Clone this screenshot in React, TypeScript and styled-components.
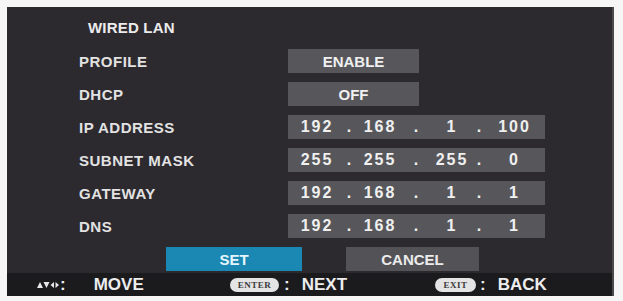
import React from 'react';
import styled, { createGlobalStyle } from 'styled-components';

const GlobalStyle = createGlobalStyle`
  html, body {
    margin: 0;
    padding: 0;
    background: #f6f6f6;
  }
  body {
    font-family: "Liberation Sans", Arial, sans-serif;
  }
`;

const Screen = styled.div`
  margin: 7px 0 0 7px;
  width: 607px;
  height: 289px;
  background: #2c2a2f;
  border-right: 2px solid #4a494d;
  box-sizing: border-box;
  display: flex;
  flex-direction: column;
  overflow: hidden;
`;

const Body = styled.div`
  flex: 1;
  padding: 9px 0 0 72px;
  display: flex;
  flex-direction: column;
  gap: 9px;
`;

const Title = styled.div`
  height: 24px;
  line-height: 24px;
  margin-left: 9px;
  color: #ececec;
  font-size: 15px;
  font-weight: bold;
  letter-spacing: 0.2px;
`;

const Row = styled.div`
  display: grid;
  grid-template-columns: 209px auto;
  height: 24px;
  align-items: center;
`;

const Label = styled.div`
  color: #e2e2e2;
  font-size: 15px;
  font-weight: bold;
  letter-spacing: 0.5px;
`;

const ValueBox = styled.div`
  width: 131px;
  height: 24px;
  background: #57575b;
  color: #f0f0f0;
  font-size: 15px;
  font-weight: bold;
  display: flex;
  align-items: center;
  justify-content: center;
`;

const IpBox = styled.div`
  width: 257px;
  height: 24px;
  background: #57575b;
  color: #f0f0f0;
  font-size: 16px;
  font-weight: bold;
  letter-spacing: 2px;
  display: grid;
  grid-template-columns: 58px 8px 52px 22px 48px 8px 1fr;
  align-items: center;
  text-align: center;
`;

const Buttons = styled.div`
  display: flex;
  gap: 44px;
  margin-left: 87px;
`;

const Button = styled.div<{ $active?: boolean }>`
  width: ${(p) => (p.$active ? '136px' : '133px')};
  height: 24px;
  background: ${(p) => (p.$active ? '#1b88b4' : '#535357')};
  color: ${(p) => (p.$active ? '#e6f6fb' : '#ececec')};
  font-size: 15px;
  font-weight: bold;
  display: flex;
  align-items: center;
  justify-content: center;
`;

const Footer = styled.div`
  height: 23px;
  margin-top: 2px;
  background: #1b1a1d;
  display: grid;
  grid-template-columns: 193px 205px 1fr;
  align-items: center;
  padding-left: 30px;
`;

const Hint = styled.div`
  display: flex;
  align-items: center;
  color: #ededed;
  font-size: 17px;
  font-weight: bold;
`;

const Colon = styled.span<{ $before: number; $after: number }>`
  margin: 0 ${(p) => p.$after}px 0 ${(p) => p.$before}px;
`;

const Pill = styled.span<{ $w: number }>`
  width: ${(p) => p.$w}px;
  height: 14px;
  border-radius: 7px;
  background: #e4e4e4;
  color: #3a3a3a;
  font-family: "Liberation Serif", serif;
  font-size: 9px;
  font-weight: bold;
  letter-spacing: 0.5px;
  display: flex;
  align-items: center;
  justify-content: center;
`;

const Arrows = () => (
  <svg width="22" height="8" viewBox="0 0 22 8">
    <polygon points="0,7 3,1 6,7" fill="#e8e8e8" />
    <polygon points="6.5,1 12.5,1 9.5,7" fill="#e8e8e8" />
    <polygon points="13.5,4 17,1 17,7" fill="#e8e8e8" />
    <polygon points="18.5,1 22,4 18.5,7" fill="#e8e8e8" />
  </svg>
);

const Ip = ({ parts }: { parts: string[] }) => (
  <IpBox>
    <span>{parts[0]}</span>
    <span>.</span>
    <span>{parts[1]}</span>
    <span>.</span>
    <span>{parts[2]}</span>
    <span>.</span>
    <span>{parts[3]}</span>
  </IpBox>
);

const ipRows = [
  { label: 'IP ADDRESS', parts: ['192', '168', '1', '100'] },
  { label: 'SUBNET MASK', parts: ['255', '255', '255', '0'] },
  { label: 'GATEWAY', parts: ['192', '168', '1', '1'] },
  { label: 'DNS', parts: ['192', '168', '1', '1'] },
];

export default function App() {
  return (
    <>
      <GlobalStyle />
      <Screen>
        <Body>
          <Title>WIRED LAN</Title>
          <Row>
            <Label>PROFILE</Label>
            <ValueBox>ENABLE</ValueBox>
          </Row>
          <Row>
            <Label>DHCP</Label>
            <ValueBox>OFF</ValueBox>
          </Row>
          {ipRows.map((r) => (
            <Row key={r.label}>
              <Label>{r.label}</Label>
              <Ip parts={r.parts} />
            </Row>
          ))}
          <Buttons>
            <Button $active>SET</Button>
            <Button>CANCEL</Button>
          </Buttons>
        </Body>
        <Footer>
          <Hint>
            <Arrows />
            <Colon $before={1} $after={28}>:</Colon>
            MOVE
          </Hint>
          <Hint>
            <Pill $w={49}>ENTER</Pill>
            <Colon $before={5} $after={12}>:</Colon>
            NEXT
          </Hint>
          <Hint>
            <Pill $w={41}>EXIT</Pill>
            <Colon $before={4} $after={12}>:</Colon>
            BACK
          </Hint>
        </Footer>
      </Screen>
    </>
  );
}
